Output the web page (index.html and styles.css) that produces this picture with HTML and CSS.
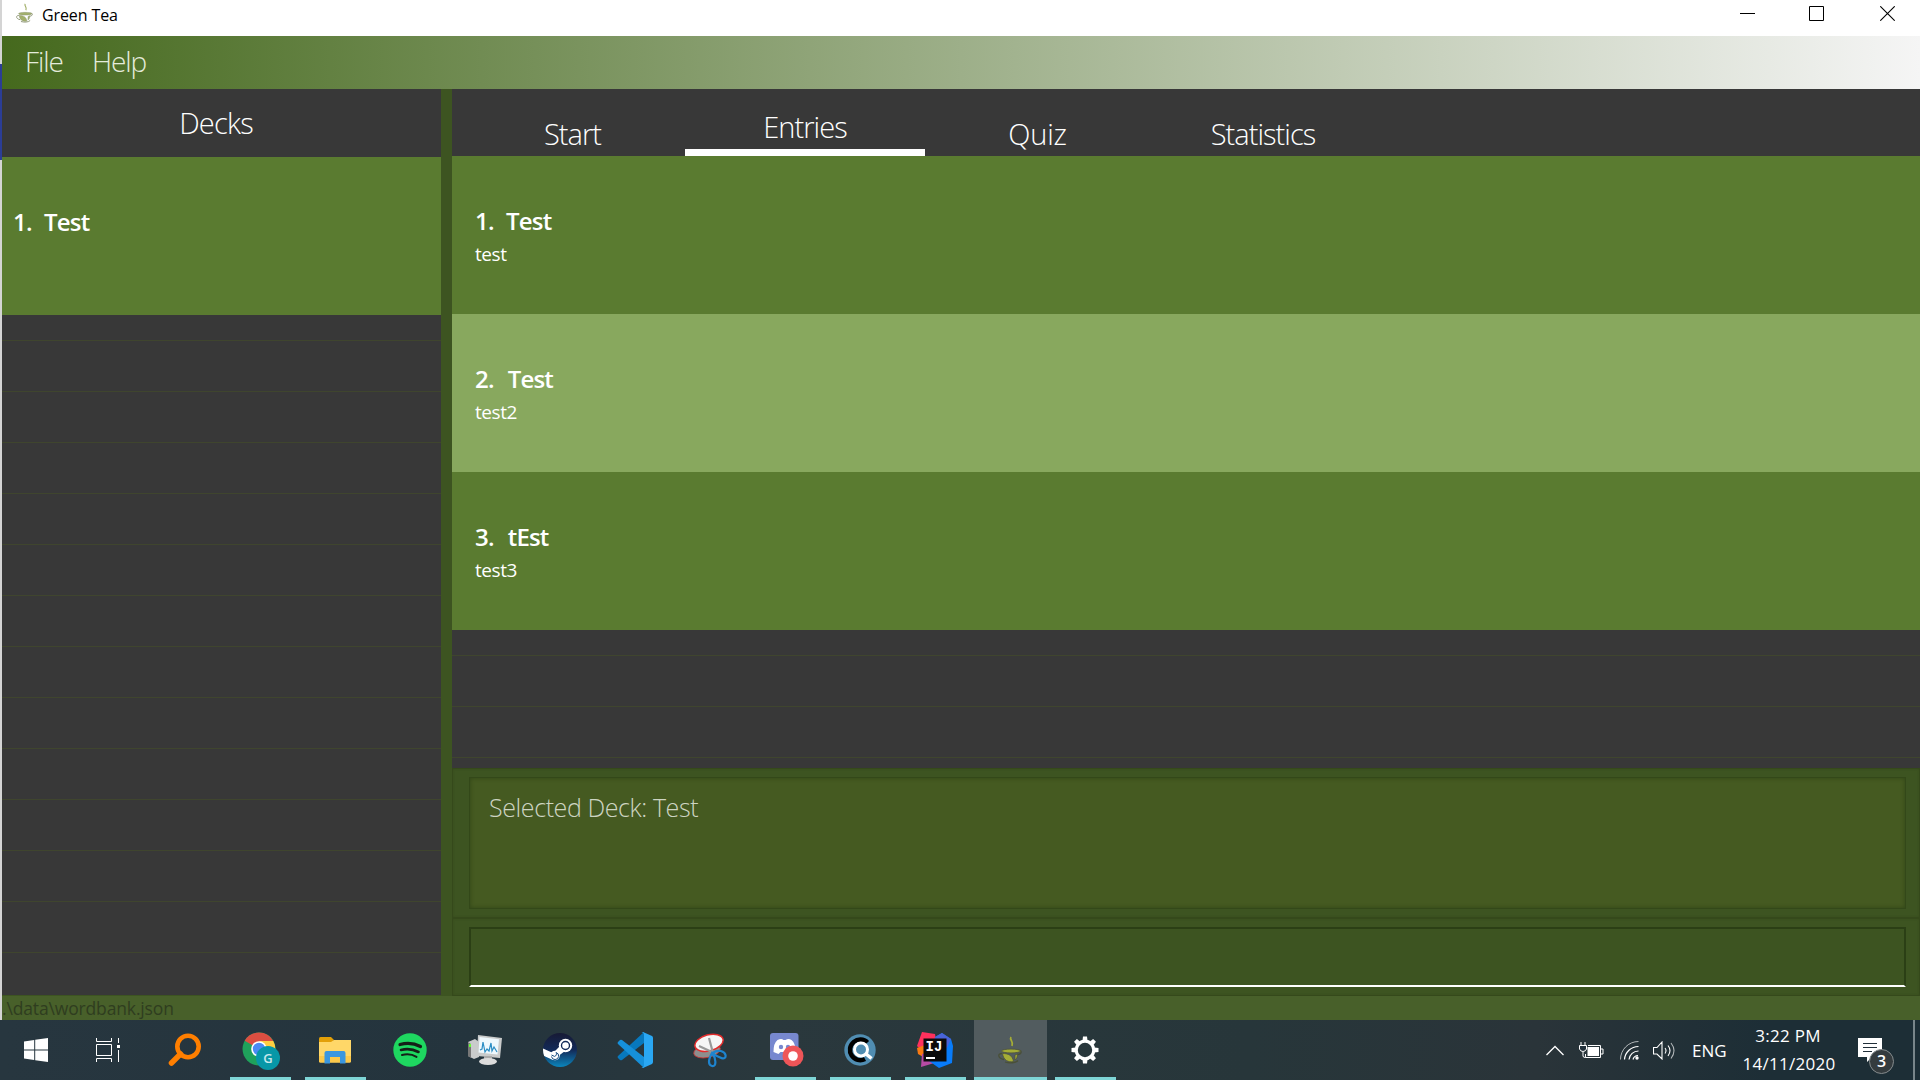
FILE: index.html
```html
<!DOCTYPE html>
<html lang="en">
<head>
<meta charset="utf-8">
<title>Green Tea</title>
<link rel="stylesheet" href="styles.css">
</head>
<body>
<svg class="defs" width="0" height="0">
  <symbol id="cup" viewBox="0 0 24 28">
    <path d="M13 1c-2 3 3 4 1 9" fill="none" stroke="currentColor" stroke-width="1.7"/>
    <path class="cup-line" d="M19 14.500c6-1 5 4 0 4M4 17.500c-5 0-4 5 2 6M7 26c5 1.500 11 1 13-1.500" fill="none" stroke-width="1.300"/>
    <ellipse class="cup-line" cx="13" cy="15" rx="9.500" ry="1.900" fill="currentColor" stroke-width=".7"/>
    <path class="cup-line" d="M4.500 17.500c6 0 10 2 11 8-5 1-10-1-11-8zM17 19l2.500-1c0 3-1 5-2.500 6z" fill="currentColor" stroke-width=".7"/>
  </symbol>
</svg>
<div class="screen">
  <div class="window">
    <header class="titlebar">
      <svg class="app-icon" width="17" height="20"><use href="#cup"/></svg>
      <span class="app-title">Green Tea</span>
      <div class="controls">
        <svg width="15" height="15" viewBox="0 0 15 15"><path d="M0 7.5h15" stroke="#000"/></svg>
        <svg class="maximize" width="15" height="15" viewBox="0 0 15 15"><path d="M.5.5h14v14H.5z" fill="none" stroke="#000"/></svg>
        <svg width="15" height="15" viewBox="0 0 15 15"><path d="M.3.3l14.4 14.4M14.7.3L.3 14.7" stroke="#000" stroke-width="1.1"/></svg>
      </div>
    </header>
    <nav class="menubar"><span class="menu-file">File</span><span class="menu-help">Help</span></nav>
    <main class="content">
      <section class="decks">
        <h2 class="decks-title"><span>Decks</span></h2>
        <div class="deck"><b class="num">1.</b><b>Test</b></div>
        <div class="empty"></div>
      </section>
      <section class="main">
        <div class="tabs">
          <div class="tab t-start"><span>Start</span></div>
          <div class="tab active t-entries"><span>Entries</span></div>
          <div class="tab t-quiz"><span>Quiz</span></div>
          <div class="tab t-stats"><span>Statistics</span></div>
        </div>
        <div class="entry"><div class="word"><b class="num">1.</b><b>Test</b></div><div class="trans">test</div></div>
        <div class="entry alt"><div class="word"><b>2.</b><b>Test</b></div><div class="trans">test2</div></div>
        <div class="entry"><div class="word"><b>3.</b><b>tEst</b></div><div class="trans">test3</div></div>
        <div class="empty"></div>
        <div class="pane result-pane"><div class="result"><span>Selected Deck: Test</span></div></div>
        <div class="pane command-pane"><div class="command"></div></div>
      </section>
    </main>
    <footer class="status"><span>.\data\wordbank.json</span></footer>
  </div>
  <div class="taskbar">
    <div class="apps">
      <div class="app start"><svg width="24" height="24" viewBox="0 0 24 24"><path d="M0 3.4L10.2 2v9.500H0zM11.200 1.800L24 0v11.500H11.200zM0 12.500h10.200V22L0 20.600zM11.200 12.500H24V24l-12.800-1.800z" fill="#fff"/></svg></div>
      <div class="app taskview"><svg width="24" height="24" viewBox="0 0 24 24" fill="none" stroke="#fff"><path d="M.5 0v3.500h15V0M.5 6.500h15v11H.5zM.5 24v-3.500h15V24M22.500 0v5M22.500 12v12"/><path d="M21 7h3v3h-3z" fill="#fff" stroke="none"/></svg></div>
      <div class="app"><svg width="34" height="34" viewBox="0 0 34 34" fill="none" stroke="#ff7f00"><circle cx="20" cy="13.500" r="10.700" stroke-width="4.600"/><path d="M12.500 21L3.500 30" stroke-width="5.500" stroke-linecap="round"/></svg></div>
      <div class="app open chrome"><svg width="38" height="38" viewBox="0 0 38 38"><circle cx="17" cy="17" r="16.500" fill="#1fa15b"/><path d="M17 17L2.700 8.700A16.500 16.500 0 0 1 31.300 9H17z" fill="#dc4e41"/><path d="M17 9h14.300A16.500 16.500 0 0 1 17 33.500L24 21z" fill="#ffcd41"/><circle cx="17" cy="17" r="7.800" fill="#fff"/><circle cx="17" cy="17" r="6.200" fill="#4a8af4"/><circle cx="26" cy="26" r="12" fill="#0797a7"/><text x="26" y="31" text-anchor="middle" class="glyph-g">G</text></svg></div>
      <div class="app open"><svg width="32" height="27" viewBox="0 0 32 27"><path d="M0 1.500Q0 0 1.500 0H12l3 3-2 4H0z" fill="#e3a008"/><path d="M0 5h12l3-2h17v21q0 1.500-1.500 1.500h-29Q0 25.500 0 24z" fill="#ffd768"/><path d="M0 19h32v5q0 1.500-1.500 1.500h-29Q0 25.500 0 24z" fill="#fdc94a"/><path d="M5.500 26.500V16q0-2 2-2h17q2 0 2 2v10.500H21V20H11v6.500z" fill="#3b97e0"/></svg></div>
      <div class="app"><svg width="34" height="34" viewBox="0 0 34 34"><circle cx="17" cy="17" r="16.700" fill="#1ed760"/><g fill="none" stroke="#152018" stroke-linecap="round"><path d="M7 11.500q11-3 20.500 2" stroke-width="3.200"/><path d="M8 17q9-2.500 17.500 2" stroke-width="2.600"/><path d="M9 22q8-2 14.500 1.800" stroke-width="2.100"/></g></svg></div>
      <div class="app"><svg width="36" height="32" viewBox="0 0 36 32"><path d="M1 8l7-3 4 3v15l-5 2-6-3z" fill="#c9cbcb"/><path d="M1 8l3 2v14l-3-2z" fill="#777"/><path d="M2 10h2v3H2z" fill="#6f3"/><path d="M11 1l24 3-2 20-23-2z" fill="#c9cbcb"/><path d="M12.500 3L32 5.300 30.500 20.500 11.500 18.500z" fill="#eef8fd"/><path d="M13 16l2-1 1-7 2 10 2-3 2 2 2-8 1 8 2-4 3 5" fill="none" stroke="#2b8dc4" stroke-width="1.200"/><path d="M17 22h8v3h-8z" fill="#aaa"/><ellipse cx="21" cy="27.500" rx="9" ry="3.500" fill="#dcdcdc"/></svg></div>
      <div class="app"><svg width="34" height="34" viewBox="0 0 34 34"><defs><linearGradient id="steam" x2="0" y2="1"><stop stop-color="#171a35"/><stop offset=".5" stop-color="#132a58"/><stop offset="1" stop-color="#0b86bd"/></linearGradient><clipPath id="disc"><circle cx="17" cy="17" r="17"/></clipPath></defs><circle cx="17" cy="17" r="17" fill="url(#steam)"/><g clip-path="url(#disc)"><path d="M-1 15l11 5 6-6 1-5 5 9-8 6-4 3-11-5z" fill="#fff"/><circle cx="22.500" cy="12.500" r="6.700" fill="#fff"/><circle cx="22.500" cy="12.500" r="4" fill="#fff" stroke="#142b58" stroke-width="1.400"/><circle cx="12" cy="22.500" r="4.800" fill="#fff"/><path d="M8.500 22l3 1.400A2.500 2.500 0 0 0 13 19.500a3.600 3.600 0 1 1-4.500 4" fill="none" stroke="#174b80" stroke-width="1"/></g></svg></div>
      <div class="app"><svg width="36" height="36" viewBox="0 0 36 36"><path d="M27 0L1 24q-1 1 0 2l2 2q1 .5 2 0L27 11z" fill="#0878bd"/><path d="M27 36L1 12q-1-1 0-2l2-2q1-.5 2 0L27 25z" fill="#1690da"/><path d="M26 0l9 4q1 .500 1 2v24q0 1-1 2l-9 4q-1 0-1.500-1 2.500 1 2.500-2V3q0-3-2.500-2z" fill="#2aa7f3"/></svg></div>
      <div class="app"><svg width="34" height="35" viewBox="0 0 34 35"><ellipse cx="14" cy="18" rx="13.500" ry="6.500" fill="#8e8e8e" stroke="#c33" stroke-width=".8" transform="rotate(-12 14 18)"/><ellipse cx="16" cy="9.800" rx="14.500" ry="8" fill="#f6f6f6" stroke="#e22b2b" stroke-width="1.500" transform="rotate(-15 16 9.800)"/><path d="M6 13l14 6.500M16 5l4 15" stroke="#999" stroke-width="2.200" fill="none"/><g fill="none" stroke="#1e84cf" stroke-width="2.200"><path d="M19.500 20c6-4 12-2 13 2 1 6-7 3-13-2zM19 20c-4 7-4 12 0 13 5 1 4-8 0-13z"/></g></svg></div>
      <div class="app open discord"><svg width="34" height="34" viewBox="0 0 34 34"><rect width="28.500" height="27" y="0" rx="3" fill="#7788cf"/><path d="M3.500 19q0-9 4-12 4-2 6 0h2q3-2 6 0 4 3 4 11l-5 3-2-2h-8l-2 2z" fill="#fff"/><circle cx="11" cy="14" r="2.200" fill="#7788cf"/><circle cx="18" cy="14" r="2.200" fill="#7788cf"/><circle cx="23" cy="23" r="10.500" fill="#ee5558"/><circle cx="23" cy="23" r="4.800" fill="#fff"/></svg></div>
      <div class="app open"><svg width="32" height="32" viewBox="0 0 32 32"><circle cx="16" cy="16" r="15.700" fill="#508db2"/><path d="M23.500 8.500A10.300 10.300 0 1 0 21 25" fill="none" stroke="#000" stroke-width="4.500"/><circle cx="17" cy="15.500" r="6.500" fill="none" stroke="#fff" stroke-width="3"/><path d="M21.500 19.500l6 5" stroke="#fff" stroke-width="3.500"/></svg></div>
      <div class="app open"><svg width="36" height="36" viewBox="0 0 36 36"><path d="M5 0l13 2 2 12L8 22 0 14z" fill="#fe315d"/><path d="M0 16l8-3v13l-7-4z" fill="#f97a12"/><path d="M5 22l12-3 7 10-20 6z" fill="#b74ba5"/><path d="M18 5l7-4 9 6 2 7-1 17-13 5-10-7z" fill="#087cfa"/><path d="M18 5l7-4 9 6-4 9H18z" fill="#4a63d9"/><rect x="6.500" y="6.500" width="23" height="23" fill="#0b0b0b"/><text x="8.500" y="19" class="glyph-ij">IJ</text><path d="M9 25h9v2H9z" fill="#fff"/></svg></div>
      <div class="app open current"><svg class="task-cup" width="24" height="28"><use href="#cup"/></svg></div>
      <div class="app open settings"><svg width="28" height="28" viewBox="-14 -14 28 28"><circle r="8.800" fill="none" stroke="#fff" stroke-width="3.200"/><g fill="#fff"><path id="tooth" d="M-2.500-9.500l.5-4h4l.5 4z"/><use href="#tooth" transform="rotate(45)"/><use href="#tooth" transform="rotate(90)"/><use href="#tooth" transform="rotate(135)"/><use href="#tooth" transform="rotate(180)"/><use href="#tooth" transform="rotate(225)"/><use href="#tooth" transform="rotate(270)"/><use href="#tooth" transform="rotate(315)"/></g></svg></div>
    </div>
    <div class="tray">
      <svg width="18" height="11" viewBox="0 0 18 11"><path d="M.5 10L9 1.500 17.500 10" fill="none" stroke="#fff" stroke-width="1.300"/></svg>
      <svg class="battery" width="25" height="17" viewBox="0 0 25 17"><path d="M6.500 15.500v-3M9 3.500h12.500v12h-15V12M22 7h2v5h-2" fill="none" stroke="#fff"/><path d="M8.500 5H20v9H8.500z" fill="#fff"/><path d="M2 0v3M6 0v3M.5 3.500h7V7q-1 2.500-3.500 2.500T.5 7zM4 10v4q0 1.500 2.500 1.500" fill="#22303a" stroke="#fff"/></svg>
      <svg class="wifi" width="19" height="19" viewBox="0 0 19 19" fill="none" stroke="#fff"><path d="M.5 18.500A18 18 0 0 1 18.500.5" opacity=".65"/><path d="M4.500 18.500a14 14 0 0 1 14-13M9 18.500a9.500 9.500 0 0 1 9.500-8.500M13 18.500a5.500 5.500 0 0 1 5-4" stroke-width="1.200"/><circle cx="17" cy="17" r="1.700" fill="#fff" stroke="none"/></svg>
      <svg class="volume" width="23" height="19" viewBox="0 0 23 19" fill="none" stroke="#fff" stroke-width="1.100"><path d="M.5 6.500h3.500L9 1v17l-5-5H.5zM12 7q2 2.500 0 5.500M15 4.500q4 5 0 10.500"/><path d="M18 2q6 7.500 0 15.500" opacity=".65"/></svg>
      <span class="lang">ENG</span>
      <div class="clock"><span class="time">3:22 PM</span><span class="date">14/11/2020</span></div>
      <div class="notice"><svg width="24" height="25" viewBox="0 0 24 25"><path d="M0 0h24v19H14l-5 5v-5H0z" fill="#fff"/><path d="M5 5.500h14M5 9.500h14M5 13.500h9" stroke="#22303a"/></svg><span class="badge">3</span></div>
      <div class="peek"></div>
    </div>
  </div>
</div>
</body>
</html>
```
FILE: styles.css
```css
* { box-sizing: border-box; }
body { margin: 0; font-family: "Open Sans", "Noto Sans", sans-serif; color: #fff; overflow: hidden; }
.defs { display: block; position: absolute; }
.cup-line { stroke: var(--cup-line); }
.screen { width: 1920px; height: 1080px; display: flex; flex-direction: column; background: linear-gradient(#d4d4d4 64px, #2b3d96 64px, #2b3d96 160px, #d4d4d4 160px); }
.window { height: 1020px; margin-left: 2px; display: flex; flex-direction: column; background: #3d5421; }
.titlebar { height: 36px; background: #fff; color: #000; display: flex; align-items: flex-start; padding-left: 14px; }
.app-icon { color: #a3b06b; --cup-line: #8b9473; margin-top: 3px; }
.app-title { font-size: 16px; line-height: 30px; margin-left: 9px; letter-spacing: -.1px; }
.controls { margin-left: auto; display: flex; padding: 6px 25px 0 0; gap: 55px; }
.maximize { margin: 0 1px 0 -1px; }
.menubar { height: 53px; flex: none; display: flex; padding-left: 23px; font-size: 28px; font-weight: 300; line-height: 51px; letter-spacing: -1.1px; color: #e4ebdc; background: linear-gradient(90deg, #45691d, #f5f5f5); }
.menu-file { width: 67px; }
.content { flex: 1; display: flex; gap: 11px; min-height: 0; }
.decks { width: 439px; display: flex; flex-direction: column; height: 906px; }
.decks-title { margin: 0; height: 68px; background: #383838; font-size: 29px; line-height: 67px; font-weight: 300; letter-spacing: -.8px; text-align: center; padding-right: 11px; }
.deck, .entry { height: 158px; flex: none; background: #5a7b30; }
.deck { padding: 48px 0 0 11px; }
.deck, .word { display: flex; gap: 14px; font-size: 24px; line-height: 34px; letter-spacing: -.8px; }
b { font-weight: 600; }
.num { width: 17px; }
.empty { flex: 1; background: repeating-linear-gradient(#383838 0 25px, #3f452e 25px 26px, #383838 26px 51px); }
.main { flex: 1; display: flex; flex-direction: column; }
.tabs { height: 67px; flex: none; background: #383838; display: flex; font-size: 29px; font-weight: 300; line-height: 40px; letter-spacing: -.95px; align-items: flex-end; }
.tab { height: 42px; text-align: center; }
.t-start { width: 233px; padding-left: 8px; }
.t-entries { width: 240px; }
.t-quiz { width: 225px; letter-spacing: -.2px; }
.t-stats { width: 226px; }
.tab.active { height: 50px; line-height: 42px; border-bottom: 7px solid #fff; }
.entry { padding: 48px 0 0 23px; }
.entry.alt { background: #88a85e; }
.trans { font-size: 19px; line-height: 33px; letter-spacing: -.45px; }
.pane { border: 1px solid #35491b; box-shadow: inset 0 0 2px #35491b; padding: 8px 13px 8px 16px; }
.result-pane { height: 150px; }
.result { height: 132px; background: #455a21; border: 1px solid #334819; box-shadow: inset 0 0 4px #304517; padding: 8px 0 0 19px; font-size: 25px; line-height: 42px; font-weight: 300; letter-spacing: -.4px; color: #cdd4c2; }
.command-pane { height: 78px; }
.command { height: 60px; border: 2px solid #2b3f15; border-bottom: 2px solid #fff; }
.status { height: 24px; background: #48602a; color: #2f3d1f; font-size: 17.5px; line-height: 24px; letter-spacing: -.15px; }
.taskbar { height: 60px; background: linear-gradient(90deg, #27363f, #24343d 25%, #2a383d 40%, #27363a 65%, #2a3439 80%, #1d2e36 92%); display: flex; justify-content: space-between; }
.apps { display: flex; padding-left: 5px; }
.app { width: 61px; margin-right: 14px; display: flex; align-items: center; justify-content: center; border-bottom: 3px solid transparent; padding: 3px 2px 0 0; }
.app.start { padding-right: 0; }
.app.taskview { padding-right: 5px; }
.app.chrome { padding: 4px 0 0 1px; }
.app.discord { padding: 3px 0 0 2px; }
.app.open { border-color: #7ed5d6; }
.app.current { width: 73px; background: #525c5f; margin: 0 8px 0 -6px; }
.task-cup { color: #a5ad36; --cup-line: #4a5038; }
.glyph-g { font: 600 13px "Open Sans", sans-serif; fill: #c7e8ec; }
.glyph-ij { font: 700 14px "Liberation Mono", monospace; fill: #fff; }
.tray { display: flex; align-items: center; }
.battery { margin-left: 15px; }
.wifi { margin-left: 16px; }
.volume { margin-left: 14px; }
.lang { font-size: 17px; width: 34px; margin-left: 16px; }
.clock { width: 96px; margin-left: 15px; font-size: 17px; line-height: 28px; letter-spacing: .3px; text-align: center; display: flex; flex-direction: column; }
.time { padding-right: 2px; }
.notice { position: relative; width: 24px; height: 25px; margin-left: 21px; }
.badge { position: absolute; left: 11px; top: 11px; width: 25px; height: 25px; border: 1px solid #858b8d; border-radius: 50%; background: #343b3e; font-size: 16px; font-weight: 600; line-height: 23px; text-align: center; }
.peek { width: 2px; height: 60px; background: #79858a; margin: 0 5px 0 31px; }
```
